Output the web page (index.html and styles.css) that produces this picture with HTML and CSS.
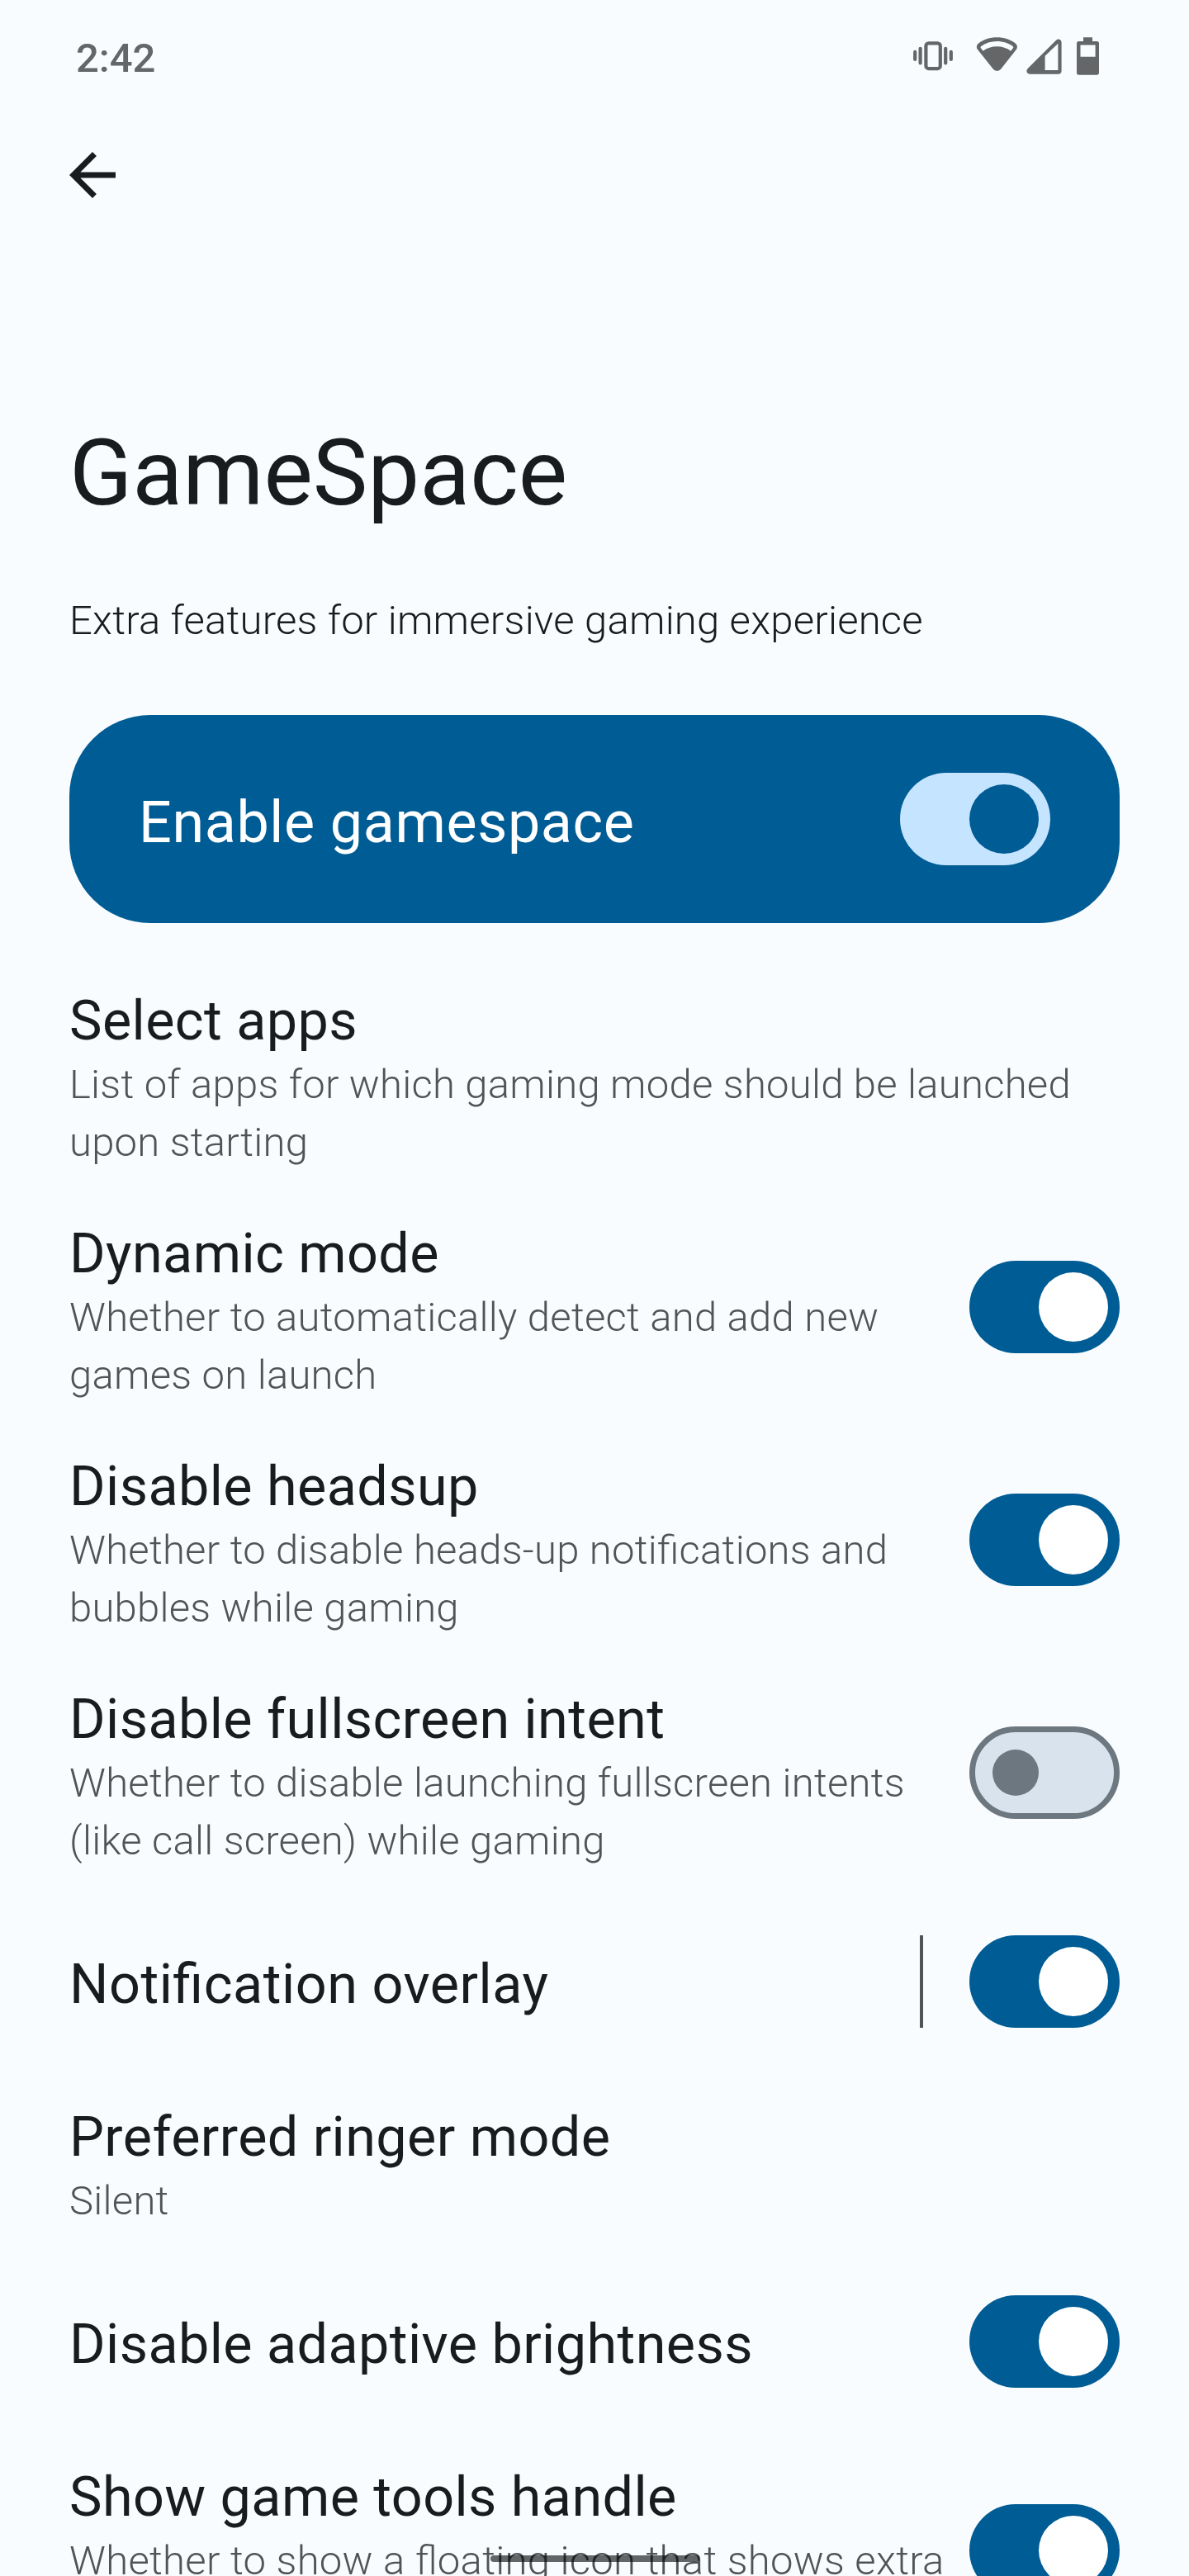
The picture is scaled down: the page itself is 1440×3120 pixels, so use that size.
FILE: index.html
```html
<!DOCTYPE html>
<html lang="en">
<head>
<meta charset="utf-8">
<title>GameSpace</title>
<link rel="stylesheet" href="styles.css">
</head>
<body>
<div class="screen">
  <header class="status-bar">
    <span class="clock">2:42</span>
    <div class="status-icons">
      <svg class="icon-vibrate" viewBox="0 0 50 46" fill="none" stroke="currentColor" stroke-width="4.2" stroke-linecap="round">
        <rect x="16.4" y="7.3" width="17.4" height="30.8" rx="3.4"/>
        <path d="M3.2 17.9v9M9.6 13.8v17.6M40.2 13.8v17.6M46.8 17.9v9"/>
      </svg>
      <svg class="icon-wifi" viewBox="0 0 51 46" fill="currentColor">
        <path fill-rule="evenodd" d="M25.3.3C16.800.3 9.600 2.900 3.400 7.200C.7 9.100.1 12.300 2 15.100L20.700 38.400C23.300 41.600 27.700 41.600 30.300 38.400L48.800 15.100C50.700 12.300 50.100 9.100 47.400 7.200C41.200 2.900 34 .3 25.300.3ZM25.300 5C33 5 39.300 7.200 44.500 10.900C45.500 11.800 45.500 12.600 44.700 13.600L42.200 16.700C37.200 13.300 32 11.300 25.300 11.300C18.800 11.300 13.500 13.300 8.600 16.700L6.100 13.600C5.300 12.600 5.300 11.800 6.300 10.900C11.500 7.200 17.800 5 25.300 5Z"/>
      </svg>
      <svg class="icon-signal" viewBox="0 0 43 46" fill="currentColor">
        <path fill-rule="evenodd" d="M36 3.700C38.600 1.400 42.600 3 42.600 6.500V40.700C42.600 43.200 41.100 44.700 38.600 44.700H4.200C.5 44.700-.9 40.700 1.700 38ZM38.400 7.700L22.600 22.800V40.100H38.400Z"/>
      </svg>
      <svg class="icon-battery" viewBox="0 0 29 46" fill="currentColor">
        <path fill-rule="evenodd" d="M9 .3H20V5H25.300Q28 5 28 7.700V43Q28 45.700 25.300 45.700H3.700Q1 45.700 1 43V7.700Q1 5 3.700 5H9ZM5.500 9.600V23.800H23.600V9.600Z"/>
      </svg>
    </div>
  </header>

  <nav class="toolbar">
    <svg class="icon-back" viewBox="0 0 24 24" fill="currentColor"><path d="M20 11H7.830l5.590-5.590L12 4l-8 8 8 8 1.410-1.410L7.830 13H20z"/></svg>
  </nav>

  <h1 class="page-title">GameSpace</h1>
  <p class="intro">Extra features for immersive gaming experience</p>

  <section class="main-switch">
    <span class="main-label">Enable gamespace</span>
    <span class="switch switch-main"><span class="thumb"></span></span>
  </section>

  <main class="list">
    <div class="row">
      <div class="text"><h2>Select apps</h2><p>List of apps for which gaming mode should be launched<br>upon starting</p></div>
    </div>
    <div class="row">
      <div class="text"><h2>Dynamic mode</h2><p>Whether to automatically detect and add new<br>games on launch</p></div>
      <span class="switch"><span class="thumb"></span></span>
    </div>
    <div class="row">
      <div class="text"><h2>Disable headsup</h2><p>Whether to disable heads-up notifications and<br>bubbles while gaming</p></div>
      <span class="switch"><span class="thumb"></span></span>
    </div>
    <div class="row">
      <div class="text"><h2>Disable fullscreen intent</h2><p>Whether to disable launching fullscreen intents<br>(like call screen) while gaming</p></div>
      <span class="switch switch-off"><span class="thumb"></span></span>
    </div>
    <div class="row row-single">
      <div class="text"><h2 class="ligature">Notification overlay</h2></div>
      <span class="divider"></span>
      <span class="switch"><span class="thumb"></span></span>
    </div>
    <div class="row row-short">
      <div class="text"><h2>Preferred ringer mode</h2><p>Silent</p></div>
    </div>
    <div class="row row-single">
      <div class="text"><h2>Disable adaptive brightness</h2></div>
      <span class="switch"><span class="thumb"></span></span>
    </div>
    <div class="row row-last">
      <div class="text"><h2>Show game tools handle</h2><p class="ligature">Whether to show a floating icon that shows extra</p></div>
      <span class="switch"><span class="thumb"></span></span>
    </div>
  </main>
  <div class="nav-handle"></div>
</div>
</body>
</html>
```
FILE: styles.css
```css
* {
  box-sizing: border-box;
}

body {
  margin: 0;
  background: #f9fcff;
  color: #181c1f;
  font-family: Roboto, "Liberation Sans", sans-serif;
  font-feature-settings: "liga" 1;
}

h1, h2, p {
  margin: 0;
  font-weight: 400;
  white-space: nowrap;
}

svg {
  display: block;
}

.screen {
  position: relative;
  width: 1440px;
  height: 3120px;
  overflow: hidden;
}

.status-bar {
  display: flex;
  justify-content: space-between;
  align-items: flex-start;
  height: 170px;
  padding: 42px 108px 0 92px;
  color: #646668;
}

.clock {
  font-size: 49px;
  font-weight: 500;
  line-height: 57px;
}

.status-icons {
  display: flex;
  padding-top: 3px;
}

.status-icons svg {
  height: 46px;
}

.icon-vibrate { width: 50px; margin-right: 27px; }
.icon-wifi { width: 51px; margin-right: 10px; }
.icon-signal { width: 43px; margin-right: 17px; }
.icon-battery { width: 29px; }

.toolbar {
  height: 337px;
  padding-left: 70px;
}

.icon-back {
  width: 84px;
  height: 84px;
}

.page-title {
  height: 210px;
  padding-left: 84px;
  font-size: 112px;
  line-height: 131px;
}

.intro {
  height: 149px;
  padding-left: 84px;
  font-size: 49px;
  font-weight: 300;
  line-height: 70px;
  letter-spacing: 0.22px;
}

.main-switch {
  display: flex;
  align-items: center;
  justify-content: space-between;
  height: 252px;
  margin: 0 84px 42px;
  padding: 0 84px;
  border-radius: 98px;
  background: #005c94;
  color: #fff;
}

.main-label {
  padding-top: 8px;
  font-size: 70px;
  line-height: 82px;
  letter-spacing: 0.63px;
}

.row {
  display: flex;
  align-items: center;
  height: 282px;
  padding: 0 84px;
}

.row-single { height: 224px; }
.row-short { height: 212px; }

.text {
  flex: 1;
  padding-top: 14px;
}

.row-single .text {
  padding-top: 6px;
}

.row-last .text {
  padding-bottom: 70px;
}

.text h2 {
  font-size: 66.5px;
  line-height: 78px;
  letter-spacing: 0.42px;
}

.text p {
  margin-top: 4px;
  color: #505457;
  font-size: 49px;
  font-weight: 300;
  line-height: 70px;
  letter-spacing: 0.25px;
}

.text h2.ligature {
  letter-spacing: 0.52px;
}

.text p.ligature {
  letter-spacing: 0.29px;
}

.divider {
  width: 4px;
  height: 112px;
  margin-right: 56px;
  background: #505457;
}

.switch {
  display: flex;
  flex: none;
  align-items: center;
  justify-content: flex-end;
  width: 182px;
  height: 112px;
  padding: 0 14px;
  border-radius: 56px;
  background: #005c94;
}

.thumb {
  width: 84px;
  height: 84px;
  border-radius: 50%;
  background: #fff;
}

.switch-main {
  background: #c5e4ff;
}

.switch-main .thumb {
  background: #005c94;
}

.switch-off {
  justify-content: flex-start;
  padding: 0 21px;
  border: 7px solid #6c777f;
  background: #d8e3ee;
}

.switch-off .thumb {
  width: 56px;
  height: 56px;
  background: #6c777f;
}

/* gesture bar drawn over the scrolling list */
.nav-handle {
  position: absolute;
  left: 594px;
  bottom: 17px;
  width: 253px;
  height: 8px;
  border-radius: 4px;
  background: rgba(0, 0, 0, 0.6);
}
```
